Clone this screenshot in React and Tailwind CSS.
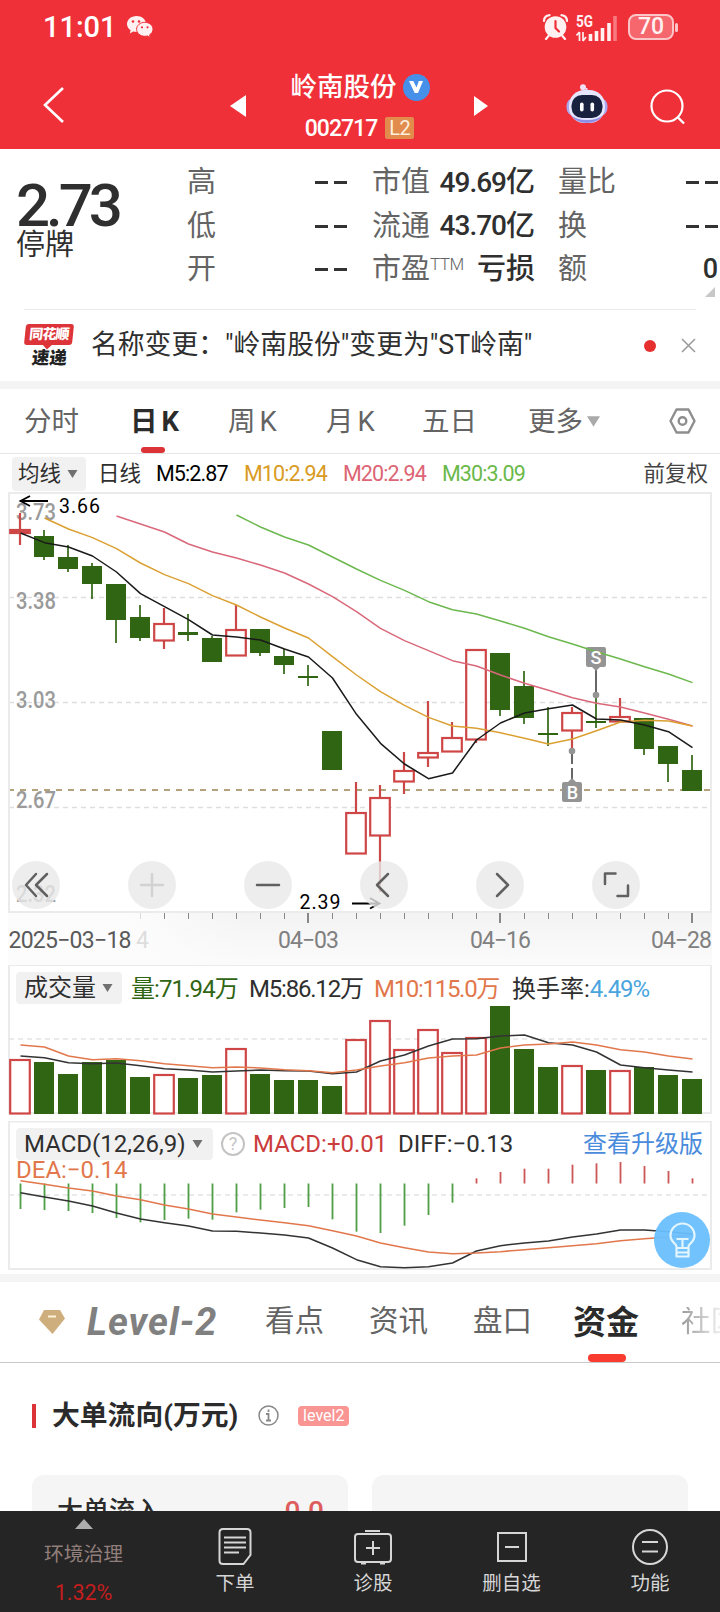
import React from 'react';
import clsx from 'clsx';

const GREEN = '#306513';
const RED = '#cf4646';

// [up, wickTop, wickBottom, bodyTop, bodyBottom]
const candles = [
  [1, 513, 545, 529, 533.5], [0, 530, 560, 536, 557], [0, 545, 572, 557, 569], [0, 563, 599, 566, 584],
  [0, 584, 643, 584, 620], [0, 605, 641, 617, 638], [1, 608, 649, 623, 641], [0, 614, 641, 632, 635],
  [0, 636, 662, 638, 662], [1, 605, 656, 629, 656], [0, 629, 656, 629, 653], [0, 649, 674, 656, 665],
  [0, 665, 686, 676, 678], [0, 731, 770, 731, 770], [1, 782, 854, 812, 854], [1, 785, 892, 797, 836],
  [1, 752, 794, 770, 782], [1, 701, 767, 752, 758], [1, 722, 752, 737, 752], [1, 649, 743, 649, 740],
  [0, 653, 716, 653, 710], [0, 671, 724, 686, 718], [0, 707, 746, 733, 735], [1, 707, 750, 712, 731],
  [0, 697, 728, 721, 723], [1, 698, 722, 716, 722], [0, 718, 755, 718, 749], [0, 746, 782, 746, 764],
  [0, 755, 791, 770, 791],
];

// series are stored in 3x units relative to the panel base
const ma5 = [144, 173, 186, 213, 261, 326, 365, 404, 450, 456, 465, 492, 516, 579, 688, 775, 837, 881, 864, 765, 714, 684, 671, 660, 702, 705, 720, 740, 788];
const ma10 = [99, 132, 158, 191, 234, 269, 296, 332, 360, 396, 429, 459, 515, 570, 620, 661, 697, 723, 730, 743, 760, 777, 762, 737, 711, 706, 708, 723];
const ma20 = [93, 117, 141, 177, 201, 219, 240, 264, 297, 335, 380, 430, 467, 497, 527, 543, 570, 595, 616, 638, 655, 666, 684, 703, 723];
const ma30 = [90, 126, 156, 180, 216, 252, 286, 316, 350, 374, 387, 408, 430, 455, 477, 500, 522, 545, 567, 593];

const volume = [300, 306, 342, 306, 300, 351, 345, 354, 345, 267, 342, 360, 360, 378, 240, 183, 270, 210, 279, 234, 138, 267, 321, 318, 330, 333, 321, 345, 357];
const vol5 = [288, 293, 308, 311, 309, 317, 326, 330, 336, 333, 330, 332, 333, 341, 336, 303, 285, 258, 237, 236, 228, 225, 248, 255, 276, 315, 323, 330, 336];
const vol10 = [255, 261, 288, 299, 296, 302, 311, 317, 323, 321, 324, 329, 332, 338, 330, 318, 308, 294, 288, 285, 264, 255, 252, 246, 255, 269, 276, 288, 297];

const macd = [747, 750, 753, 759, 774, 787, 780, 776, 779, 757, 749, 744, 741, 778, 815, 819, 797, 765, 728, 655, 636, 626, 626, 614, 610, 606, 618, 633, 655];
const diff = [698, 711, 723, 738, 759, 777, 788, 798, 813, 814, 819, 825, 834, 864, 899, 920, 923, 920, 909, 873, 857, 849, 843, 831, 822, 810, 810, 815, 822];
const dea = [662, 673, 684, 693, 708, 719, 735, 747, 762, 771, 780, 788, 797, 812, 828, 849, 863, 876, 881, 879, 875, 869, 863, 857, 851, 842, 836, 831, 825];

const cx = (i) => 20 + i * 24;
const points = (values, base, start = 0) => values.map((v, i) => `${cx(i + start) + 0.5},${base + v / 3}`).join(' ');

const Line = ({ values, base, start, color }) => (
  <polyline points={points(values, base, start)} fill="none" stroke={color} strokeWidth="1.5" strokeLinejoin="round" />
);

const Caret = ({ className }) => (
  <svg className={className} viewBox="0 0 10 8"><path d="M0 0h10L5 8z" fill="currentColor" /></svg>
);

const StatusBar = () => (
  <div className="h-[54px] pl-[43px] pr-[46px] flex items-center justify-between text-white">
    <div className="flex items-center">
      <span className="w-[84px] text-[29px] leading-none font-medium">11:01</span>
      <svg className="w-[26px] h-[22px]" viewBox="0 0 26 22">
        <path d="M9.5 0C4.2 0 0 3.6 0 8c0 2.600 1.400 4.800 3.600 6.300L2.800 17.500l3.500-1.900c1 .3 2.100.5 3.200.5C14.800 16.100 19 12.500 19 8S14.800 0 9.500 0z" fill="#fff1f1" />
        <path d="M17.800 6.300c-4.500 0-8.200 3.100-8.200 7s3.700 7 8.200 7c.9 0 1.900-.2 2.700-.4L23.300 21.600l-.7-2.800c2-1.300 3.400-3.200 3.400-5.500 0-3.900-3.700-7-8.200-7z" fill="#fff1f1" stroke="#f03039" strokeWidth="1" />
        <g fill="#f03039"><circle cx="6" cy="5.500" r="1.300" /><circle cx="12" cy="5.500" r="1.300" /><circle cx="15" cy="11.300" r="1.100" /><circle cx="20.500" cy="11.300" r="1.100" /></g>
      </svg>
    </div>
    <div className="flex items-center">
      <svg className="w-[25px] h-[26px] mr-[8px]" viewBox="0 0 25 26">
        <path d="M1 7Q1 2 6.500 1.200M24 7Q24 2 18.500 1.200M5.500 22L3 25M19.500 22L22 25" stroke="#fff1f1" strokeWidth="2.200" fill="none" strokeLinecap="round" />
        <circle cx="12.500" cy="13" r="10.800" fill="#fff1f1" />
        <path d="M12.500 7v7l3.500 3.500" stroke="#f03039" strokeWidth="2.200" fill="none" strokeLinecap="round" />
      </svg>
      <svg className="w-[42px] h-[30px] mr-[10px]" viewBox="0 -3 42 30">
        <text x="0" y="12" fontSize="16" fontWeight="700" fill="#fff1f1" fontFamily="Roboto, sans-serif" textLength="17" lengthAdjust="spacingAndGlyphs">5G</text>
        <path d="M3.500 17v9M3.500 17L0.500 20.500M7 17v9M7 26l3-4" stroke="#fff1f1" strokeWidth="1.700" fill="none" />
        <path d="M14.500 19v7M20.500 16v10M26.500 13v13M33 8v18" stroke="#fff1f1" strokeWidth="3.600" />
        <path d="M39 1v25" stroke="#f8797e" strokeWidth="3.600" />
      </svg>
      <div className="relative w-[46px] h-[26px] rounded-[8px] border-2 border-[#fbc5c7] bg-[#f5676d] text-[23px] leading-[22px] font-medium text-center text-[#fff1f1]">
        70
        <span className="absolute -right-[6px] top-[7px] w-[3px] h-[9px] rounded-sm bg-[#fbc5c7]" />
      </div>
    </div>
  </div>
);

const TitleBar = () => (
  <div className="h-[95px] flex items-center text-white">
    <svg className="w-[22px] h-[38px] ml-[43px] mt-[7px]" viewBox="0 0 22 38"><path d="M20 2L2 19l18 17" fill="none" stroke="white" strokeWidth="2.600" /></svg>
    <svg className="w-[16px] h-[22px] ml-[165px] mt-[9px]" viewBox="0 0 16 22"><path d="M16 0v22L0 11z" fill="white" /></svg>
    <div className="w-[228px] mt-[12px] flex flex-col items-center">
      <div className="flex items-center h-[41px] gap-[6px]">
        <span className="text-[26.500px] leading-none font-medium whitespace-nowrap">岭南股份</span>
        <span className="w-[27px] h-[27px] rounded-full bg-[#4790ea] flex items-center justify-center">
          <svg className="w-[14px] h-[12px]" viewBox="0 0 14 12"><path d="M0 0h4.300L7.500 6.500 9.800 0H14L9 12H5.700z" fill="white" /></svg>
        </span>
      </div>
      <div className="flex items-center h-[41px] gap-[8px] ml-[-1px]">
        <span className="text-[23px] leading-none tracking-[-1px] font-medium">002717</span>
        <span className="w-[29px] h-[22px] rounded-[2px] bg-[#e18b4c] text-[20px] leading-[22px] text-center text-[#fdeedd] tracking-[-0.500px]">L2</span>
      </div>
    </div>
    <svg className="w-[14px] h-[20px] mt-[9px]" viewBox="0 0 14 20"><path d="M0 0v20L14 10z" fill="white" /></svg>
    <svg className="w-[42px] h-[40px] ml-[78px] mt-[5px]" viewBox="0 0 42 40">
      <path d="M20.500 8V4" stroke="#dfe0ff" strokeWidth="2" />
      <circle cx="17" cy="3.300" r="3" fill="#f3dff5" />
      <rect x="0.500" y="14" width="41" height="18" rx="8" fill="#a9a8ef" />
      <rect x="3" y="6" width="36" height="33" rx="15.500" fill="#e7e6ff" />
      <path d="M5 31q5 8 16 8t16-8q-5 5-16 5T5 31z" fill="#8f8fe8" />
      <rect x="5.500" y="11" width="31" height="23" rx="10.500" fill="#18223f" />
      <rect x="14" y="18.500" width="3.600" height="9" rx="1.800" fill="white" />
      <rect x="24.500" y="18.500" width="3.600" height="9" rx="1.800" fill="white" />
    </svg>
    <svg className="w-[36px] h-[36px] ml-[42px] mt-[10px]" viewBox="0 0 36 36">
      <circle cx="17" cy="17" r="15.500" fill="none" stroke="white" strokeWidth="2.200" />
      <path d="M27.500 28L34 34.500" stroke="white" strokeWidth="2.400" />
    </svg>
  </div>
);

const Dashes = () => (
  <span className="flex shrink-0 gap-[6px]">
    <i className="w-[13px] h-[3px] bg-[#333]" />
    <i className="w-[13px] h-[3px] bg-[#333]" />
  </span>
);

const quoteRows = [
  { a: '高', b: '市值', bv: '49.69', unit: '亿', c: '量比' },
  { a: '低', b: '流通', bv: '43.70', unit: '亿', c: '换' },
  { a: '开', b: '市盈', ttm: true, unit: '亏损', c: '额', cv: '0' },
];

const Quote = () => (
  <div className="relative h-[160px] flex bg-white">
    <div className="w-[187px] shrink-0 pl-[16px] pt-[32px] text-[#2f2f2f]">
      <div className="h-[50px] text-[60px] leading-[50px] font-medium tracking-[-4px]">2.73</div>
      <div className="text-[29px] leading-[30px] mt-[-1px]">停牌</div>
    </div>
    <div className="w-[533px] shrink-0 pt-[12px]">
      {quoteRows.map((r) => (
        <div key={r.a} className="h-[43.500px] flex items-center text-[29px] leading-none text-[#646464]">
          <span className="w-[128px] shrink-0">{r.a}</span>
          <Dashes />
          <div className="ml-[25px] w-[163px] shrink-0 flex items-center justify-between whitespace-nowrap">
            <span>{r.b}{r.ttm && <sup className="text-[17px] font-light -top-[0.550em] tracking-[-0.500px]">TTM</sup>}</span>
            <span className="flex items-center font-medium text-[#2f2f2f]">
              {r.bv && <span className="text-[28px] tracking-[-1px]">{r.bv}</span>}{r.unit}
            </span>
          </div>
          <span className="w-[128px] shrink-0 ml-[23px]">{r.c}</span>
          <span className="w-[34px] shrink-0 flex justify-end pr-[2px] text-[#2f2f2f] font-medium">
            {r.cv ? <span className="text-[27px]">{r.cv}</span> : <Dashes />}
          </span>
        </div>
      ))}
    </div>
    <svg className="absolute right-[5px] bottom-[12px] w-[10px] h-[10px]" viewBox="0 0 10 10"><path d="M10 0v10H0z" fill="#c8c8c8" /></svg>
  </div>
);

const NewsBar = () => (
  <div className="h-[72px] mx-6 border-t border-[#ebebeb] flex items-center">
    <div className="w-[50px] h-[44px] flex flex-col items-center">
      <div className="relative w-[48px] h-[21px] rounded-[3px] bg-[#dc3438] -skew-x-6 text-white text-[14px] leading-[21px] font-black text-center tracking-[-0.800px]">
        同花顺
        <span className="absolute left-[20px] -bottom-[3px] w-[7px] h-[7px] bg-[#dc3438] rotate-45" />
      </div>
      <div className="mt-[3px] text-[17.500px] leading-[20px] font-black text-[#222] -skew-x-6 whitespace-nowrap">速递</div>
    </div>
    <span className="ml-[17px] text-[26.800px] leading-none text-[#2f2f2f] whitespace-nowrap">名称变更：<span>"岭南股份"变更为"ST岭南"</span></span>
    <span className="ml-auto w-[12px] h-[12px] rounded-full bg-[#e5302f]" />
    <svg className="ml-[25px] w-[15px] h-[15px]" viewBox="0 0 15 15"><path d="M1 1l13 13M14 1L1 14" stroke="#999" strokeWidth="1.500" /></svg>
  </div>
);

const periods = [
  { label: '分时', w: 'w-[106px]' },
  { label: '日K', w: 'w-[98px]', active: true },
  { label: '周K', w: 'w-[98px]' },
  { label: '月K', w: 'w-[96px]' },
  { label: '五日', w: 'w-[106px]' },
];

const PeriodTabs = () => (
  <div className="h-[65px] pl-[24px] pr-[24px] flex items-center border-b border-[#e5e5e5] text-[27.500px] leading-none text-[#646464]">
    {periods.map((p) => (
      <div key={p.label} className={clsx('relative h-full pt-[2px] flex items-center shrink-0 whitespace-nowrap', p.w, p.active && 'font-bold text-[#2b2b2b]')}>
        {p.label.endsWith('K') ? <>{p.label[0]}<span className="ml-[4px]">K</span></> : p.label}
        {p.active && <span className="absolute left-[11px] bottom-0 w-[24px] h-[6px] rounded-full bg-[#dc3436]" />}
      </div>
    ))}
    <span className="pt-[2px]">更多</span>
    <Caret className="ml-[4px] w-[13px] h-[11px] text-[#aaa]" />
    <svg className="ml-auto w-[27px] h-[26px]" viewBox="0 0 27 26">
      <path d="M7.500 1.500h12L25.500 13l-6 11.500h-12L1.500 13z" fill="none" stroke="#8e8e8e" strokeWidth="2.400" strokeLinejoin="round" />
      <circle cx="13.500" cy="13" r="3.800" fill="none" stroke="#8e8e8e" strokeWidth="2.400" />
    </svg>
  </div>
);

const MaBar = () => (
  <div className="h-[38px] pl-[12px] pr-[12px] pt-[1px] flex items-center text-[21.500px] leading-none text-[#2f2f2f] whitespace-nowrap">
    <div className="w-[74px] h-[34px] shrink-0 rounded-[4px] bg-[#f1f1f1] flex items-center pl-[6px]">均线<Caret className="ml-[6px] w-[11px] h-[8px] text-[#707070]" /></div>
    <span className="ml-[12px] w-[58px] shrink-0">日线</span>
    <span className="w-[88px] shrink-0 tracking-[-0.900px] text-black">M5:2.87</span>
    <span className="w-[99px] shrink-0 tracking-[-0.900px] text-[#d99b22]">M10:2.94</span>
    <span className="w-[99px] shrink-0 tracking-[-0.900px] text-[#dd6575]">M20:2.94</span>
    <span className="tracking-[-0.900px] text-[#6bb94b]">M30:3.09</span>
    <span className="ml-auto text-[#444]">前复权</span>
  </div>
);

const Candle = ({ i, data: [up, wt, wb, bt, bb] }) => {
  const x = cx(i);
  if (!up) {
    return (
      <g fill={GREEN}>
        <rect x={x - 1} y={wt} width="2" height={wb - wt} opacity="0.850" />
        <rect x={x - 10} y={bt} width="20" height={bb - bt} />
      </g>
    );
  }
  return (
    <g>
      <path d={`M${x} ${wt}V${bt}M${x} ${bb}V${wb}`} stroke="#c94848" strokeWidth="2.200" />
      <rect x={x - 9.8} y={bt + 1} width="19.600" height={Math.max(bb - bt - 1.5, 1)} fill={i === 0 ? RED : 'white'} stroke={RED} strokeWidth="2.200" />
    </g>
  );
};

const tools = [
  'M24 13L14 24l10 11M35 13L24 24l11 11',
  'M24 13v22M13 24h22',
  'M13 24h22',
  'M28 13L17 24l11 11',
  'M21 13l11 11-11 11',
  'M13 23V12.500h10.500M25.500 35H36V24.500',
];

const MainChart = () => (
  <div className="relative h-[473px]">
    <svg className="block w-[720px] h-[473px]" viewBox="0 492 720 473" fontFamily="Roboto, sans-serif">
      <defs>
        <linearGradient id="axis" x1="0" x2="0" y1="0" y2="1"><stop offset="0" stopColor="#f3f3f3" /><stop offset="1" stopColor="#fbfbfb" /></linearGradient>
        <linearGradient id="fade" x1="0" x2="1" y1="0" y2="0"><stop offset="0.500" stopColor="#fcfcfc" /><stop offset="1" stopColor="#fcfcfc" stopOpacity="0" /></linearGradient>
      </defs>
      <rect x="8" y="913" width="704" height="52" fill="url(#axis)" />
      <rect x="8" y="913" width="240" height="52" fill="url(#fade)" />
      <path d="M9 597.500H711M9 702.500H711M9 807.500H711" stroke="#dedede" strokeWidth="1.300" strokeDasharray="5 4" />
      <path d="M8 790H711" stroke="#b3a27c" strokeWidth="2" strokeDasharray="6 6" />
      <rect x="9" y="493" width="702" height="419" fill="none" stroke="#ebebeb" strokeWidth="2" />
      <g fontSize="23.500" fontWeight="500" fill="#9a9a9a">
        <text x="16" y="520" textLength="40" lengthAdjust="spacingAndGlyphs">3.73</text>
        <text x="16" y="609" textLength="40" lengthAdjust="spacingAndGlyphs">3.38</text>
        <text x="16" y="708" textLength="40" lengthAdjust="spacingAndGlyphs">3.03</text>
        <text x="16" y="808" textLength="40" lengthAdjust="spacingAndGlyphs">2.67</text>
        <text x="16" y="902" textLength="40" lengthAdjust="spacingAndGlyphs">2.32</text>
      </g>
      {candles.map((c, i) => <Candle key={i} i={i} data={c} />)}
      <path d="M596 670V695M572 752v12M572 768v12" stroke="#666" strokeWidth="2" />
      <g fill="#949494">
        <circle cx="596" cy="695" r="3.300" /><circle cx="572" cy="751" r="3.300" />
        <path d="M588 647h16a2 2 0 0 1 2 2v16a2 2 0 0 1-2 2h-4l-4 4-4-4h-4a2 2 0 0 1-2-2v-16a2 2 0 0 1 2-2z" />
        <path d="M564 782h4l4-4 4 4h4a2 2 0 0 1 2 2v16a2 2 0 0 1-2 2h-16a2 2 0 0 1-2-2v-16a2 2 0 0 1 2-2z" />
      </g>
      <Line values={ma30} base={485} start={9} color="#6cb84e" />
      <Line values={ma20} base={485} start={4} color="#d9687a" />
      <Line values={ma10} base={485} start={1} color="#dba032" />
      <Line values={ma5} base={485} color="#1a1a1a" />
      <g fontSize="18" fontWeight="500" fill="white" textAnchor="middle"><text x="596" y="663.500">S</text><text x="572.500" y="798.500">B</text></g>
      <g fill="none" stroke="black" strokeWidth="1.800"><path d="M48 501H20M30 496l-9.500 5 9.500 5" /><path d="M352 903.500h27M370 898l9.500 5.500-9.500 5" /></g>
      <g fontSize="19.500" fill="black">
        <text x="59" y="513" textLength="41">3.66</text>
        <text x="299.500" y="909" textLength="41">2.39</text>
      </g>
      {Array.from({ length: 24 }, (_, k) => k + 5).map((i) => {
        const major = i === 12 || i === 20 || i === 28;
        return <path key={i} d={`M${cx(i) + (major ? 0 : 0.5)} 913v${major ? 10 : 6}`} stroke={i === 5 ? '#ddd' : '#888'} strokeWidth={major ? 2 : 1} />;
      })}
      <g fontSize="23" fill="#808080">
        <text x="8.500" y="948" fill="#5a5a5a" textLength="123">2025−03−18</text>
        <text x="136" y="948" fill="#ddd">4</text>
        <text x="278" y="948" textLength="61">04−03</text>
        <text x="470" y="948" textLength="61">04−16</text>
        <text x="651" y="948" textLength="61">04−28</text>
      </g>
    </svg>
    <div className="absolute left-[12px] top-[369px] flex gap-[68px]">
      {tools.map((d, i) => (
        <button key={d} className="w-[48px] h-[48px] rounded-full bg-[#e9e9e9]/80">
          <svg className="w-[48px] h-[48px]" viewBox="0 0 48 48"><path d={d} fill="none" stroke={i === 1 ? '#d2d2d2' : '#606060'} strokeWidth="2.500" strokeLinecap="round" strokeLinejoin="round" /></svg>
        </button>
      ))}
    </div>
  </div>
);

const VolumePanel = () => (
  <div className="relative h-[156px]">
    <svg className="absolute inset-0 w-[720px] h-[156px]" viewBox="0 965 720 156">
      <path d="M9 1114V965H711V1114M9 1113H711" fill="none" stroke="#ebebeb" strokeWidth="2" />
      <path d="M9 1039H711" stroke="#e4e4e4" strokeWidth="1.500" strokeDasharray="5 4" />
      {volume.map((v, i) => {
        const y = 960 + v / 3;
        return candles[i][0]
          ? <rect key={i} x={cx(i) - 9.8} y={y} width="19.600" height={1113.5 - y} fill="white" stroke={RED} strokeWidth="2.200" />
          : <rect key={i} x={cx(i) - 10} y={y} width="20" height={1114 - y} fill={GREEN} />;
      })}
      <Line values={vol5} base={960} color="#333" />
      <Line values={vol10} base={960} color="#e2774c" />
    </svg>
    <div className="relative pt-[7px] pl-[16px] flex items-center text-[24px] leading-none text-[#2f2f2f] whitespace-nowrap">
      <div className="w-[106px] h-[32px] rounded-[4px] bg-[#f1f1f1] flex items-center pl-[8px]">成交量<Caret className="ml-[6px] w-[11px] h-[8px] text-[#707070]" /></div>
      <span className="w-[118px] pt-[2px] ml-[9px] tracking-[-0.900px] text-[#306513]">量:71.94万</span>
      <span className="w-[125px] pt-[2px] tracking-[-1.200px]">M5:86.12万</span>
      <span className="w-[138px] pt-[2px] tracking-[-1.300px] text-[#e2774c]">M10:115.0万</span>
      <span className="pt-[2px]">换手率:<span className="text-[#4aa5de] tracking-[-1px]">4.49%</span></span>
    </div>
  </div>
);

const MacdPanel = () => (
  <div className="relative h-[153px]">
    <svg className="absolute inset-0 w-[720px] h-[153px]" viewBox="0 1121 720 153">
      <rect x="9" y="1121.500" width="702" height="147.500" fill="none" stroke="#ebebeb" strokeWidth="2" />
      <path d="M9 1195H711" stroke="#e4e4e4" strokeWidth="1.500" strokeDasharray="5 4" />
      {macd.map((v, i) => (
        <path key={i} d={`M${cx(i) + 0.5} 1183.500V${960 + v / 3}`} stroke={v > 670 ? '#4d9e45' : '#cc5555'} strokeWidth="1.800" />
      ))}
      <Line values={diff} base={960} color="#333" />
      <Line values={dea} base={960} color="#e2774c" />
    </svg>
    <div className="relative pt-[7px] pl-[16px] pr-[16px] flex items-center text-[24px] leading-none text-[#2f2f2f] whitespace-nowrap">
      <div className="w-[197px] h-[32px] rounded-[4px] bg-[#f1f1f1] flex items-center pl-[8px]">
        <span>MACD(12,26,9)</span><Caret className="ml-auto mr-[10px] w-[11px] h-[8px] text-[#707070]" />
      </div>
      <span className="ml-[8px] w-[24px] h-[24px] rounded-full border-2 border-[#c4c4c4] text-[#c4c4c4] text-[18px] leading-[20px] text-center">?</span>
      <span className="ml-[8px] w-[145px] text-[#cb3c3c]">MACD:+0.01</span>
      <span>DIFF:−0.13</span>
      <span className="ml-auto mr-[1px] text-[#4a8bdb]">查看升级版</span>
    </div>
    <div className="relative mt-[-1px] pl-[16px] text-[24px] leading-[22px] text-[#e2774c]">DEA:−0.14</div>
    <div className="absolute left-[654px] top-[91px] w-[56px] h-[56px] rounded-full bg-[#6ac0fd]/95">
      <svg className="w-[56px] h-[56px]" viewBox="0 0 56 56">
        <path d="M22.500 36v-1.500c0-2.500-6-4.500-6-11a12 12 0 0 1 24 0c0 6.500-6 8.500-6 11V36zM22.500 36v8.500h12V36M22.500 40.500h12M22.500 27h12M28.500 27v9" fill="none" stroke="#e4f6fd" strokeWidth="2.200" strokeLinejoin="round" />
      </svg>
    </div>
  </div>
);

const InfoTabs = () => (
  <div className="h-[81px] pl-[39px] flex items-center border-b border-[#c8c8c8] text-[29.500px] leading-none text-[#646464] whitespace-nowrap overflow-hidden">
    <svg className="w-[26px] h-[24px] shrink-0" viewBox="0 0 26 24"><path d="M5 0h16l5 8.500L13.500 24 0 9.500z" fill="#cfae7d" /><path d="M9 6.500h8" stroke="#fff3dc" strokeWidth="2" /></svg>
    <span className="ml-[22px] w-[156px] shrink-0 text-[38px] font-bold italic tracking-[1px] text-[#808080]">Level-2</span>
    <span className="w-[104px] shrink-0 ml-[22px]">看点</span>
    <span className="w-[104px] shrink-0">资讯</span>
    <span className="w-[100px] shrink-0">盘口</span>
    <div className="relative w-[108px] shrink-0 h-full flex items-center text-[33px] font-bold text-[#2b2b2b]">
      <span>资金</span>
      <span className="absolute left-[15px] bottom-0 w-[38px] h-[8px] rounded-full bg-[#f93c30]" />
    </div>
    <span className="shrink-0 bg-linear-to-r from-[#999] to-white to-[46px] bg-clip-text text-transparent">社区</span>
  </div>
);

const FlowSection = () => (
  <div className="h-[148px] overflow-hidden">
    <div className="h-[112px] pl-[32px] flex items-center pb-[7px]">
      <span className="w-[4px] h-[24px] bg-[#dc3436]" />
      <span className="ml-[16px] text-[27.800px] leading-none font-bold text-[#2b2b2b]">大单流向(万元)</span>
      <svg className="ml-[20px] w-[21px] h-[21px]" viewBox="0 0 21 21">
        <circle cx="10.500" cy="10.500" r="9.500" fill="none" stroke="#888" strokeWidth="1.500" />
        <path d="M10.500 4.500v2.500M8 9h2.500v6.500M8 15.500h5" fill="none" stroke="#888" strokeWidth="1.800" />
      </svg>
      <span className="ml-[19px] w-[51px] h-[20px] rounded-[4px] bg-[#f99593] text-[16px] leading-[20px] text-center text-white">level2</span>
    </div>
    <div className="px-8 flex gap-6">
      <div className="w-[316px] h-[160px] rounded-[12px] bg-[#f5f5f5] pl-[25px] pr-[24px] pt-[21px] flex justify-between text-[26px] leading-[30px] font-medium text-[#2b2b2b]">
        <span>大单流入</span>
        <span className="text-[28px] leading-[32px] text-[#dd5c5c]">0.0</span>
      </div>
      <div className="w-[316px] h-[160px] rounded-[12px] bg-[#f5f5f5]" />
    </div>
  </div>
);

const NavItem = ({ label, className, children }) => (
  <div className={clsx('flex flex-col items-center shrink-0', className)}>
    <svg className="w-[42px] h-[42px] mt-[14px]" viewBox="0 0 42 42" fill="none" stroke="#d6d6d6" strokeWidth="2">{children}</svg>
    <span className="mt-[5px] text-[19.500px] leading-[24px] text-[#d6d6d6]">{label}</span>
  </div>
);

const BottomNav = () => (
  <div className="h-[101px] bg-[#252525] flex">
    <div className="w-[167px] flex flex-col items-center">
      <svg className="w-[18px] h-[10px] mt-[8px]" viewBox="0 0 18 10"><path d="M9 0l9 10H0z" fill="#acacac" /></svg>
      <span className="mt-[14px] text-[19.800px] leading-[24px] text-[#927f7b]">环境治理</span>
      <span className="mt-[15px] text-[21.500px] leading-[22px] text-[#c31d1d]">1.32%</span>
    </div>
    <NavItem label="下单" className="w-[136px]">
      <path d="M9 4h24q3.500 0 3.500 3.500V30l-7 9H9q-3.500 0-3.500-3.500v-28Q5.500 4 9 4zM10 12.500h22M10 17.500h22M10 22.500h22M10 27.500h15" />
    </NavItem>
    <NavItem label="诊股" className="w-[140px]">
      <path d="M13 6h15M6 9h30q3 0 3 3v22q0 3-3 3H6q-3 0-3-3V12q0-3 3-3zM21 16v14M14 23h14M9 38.500h5M28 38.500h5" />
    </NavItem>
    <NavItem label="删自选" className="w-[137px]">
      <path d="M7 8h28v28H7zM14 22h14" />
    </NavItem>
    <NavItem label="功能" className="w-[140px]">
      <circle cx="21" cy="22" r="17" /><path d="M13 17h16M13 26.500h16" />
    </NavItem>
  </div>
);

const App = () => {
  return (
    <div className="w-[720px] h-[1612px] overflow-hidden bg-white font-['Roboto','Noto_Sans_CJK_SC',sans-serif]">
      <header className="bg-[#f03039]">
        <StatusBar />
        <TitleBar />
      </header>
      <Quote />
      <NewsBar />
      <div className="h-[8px] bg-[#f4f4f4]" />
      <PeriodTabs />
      <MaBar />
      <MainChart />
      <VolumePanel />
      <MacdPanel />
      <div className="h-[8px] bg-[#f4f4f4]" />
      <InfoTabs />
      <FlowSection />
      <BottomNav />
    </div>
  );
};

export default App;
